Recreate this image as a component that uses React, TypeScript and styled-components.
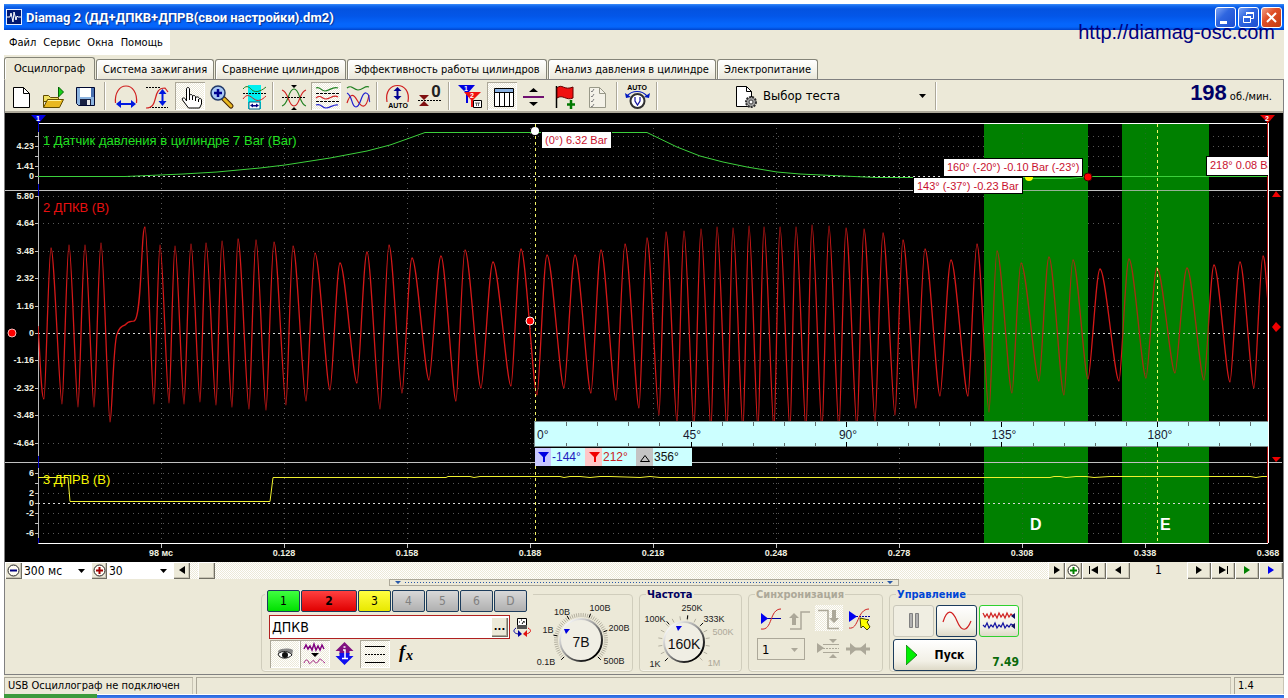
import React from 'react';
import styled, { createGlobalStyle, css } from 'styled-components';

const UI = '"DejaVu Sans Condensed", "DejaVu Sans", sans-serif';
const ARIAL = '"Liberation Sans", Arial, sans-serif';
const FACE = '#ece9d8';
const checker = css`
  background: repeating-conic-gradient(#ffffff 0 25%, #ece9d8 0 50%) 0 0 / 2px 2px;
`;

const GlobalStyle = createGlobalStyle`
  * { box-sizing: border-box; }
  body { margin: 0; background: #fff; font-family: ${UI}; font-size: 11px; color: #000; }
  button, input, select { font: inherit; color: inherit; margin: 0; padding: 0; border: 0; border-radius: 0; }
  svg { display: block; }
  svg text { white-space: pre; }
`;

const Page = styled.div`
  padding: 4px 4px 0;
  height: 100vh;
  min-height: 698px;
  overflow: hidden;
`;
const Shell = styled.div`
  position: relative;
  background: ${FACE};
`;
const TitleBar = styled.header`
  display: flex;
  align-items: center;
  gap: 4px;
  height: 26px;
  padding: 0 2px;
  background: linear-gradient(#3c8cf8 0, #1268ee 2px, #0453e0 5px, #0356e8 12px, #0566fc 20px, #0565fa 23px, #0044cc 100%);
`;
const Title = styled.h1`
  flex: 1;
  margin: 0;
  font-family: Roboto, "Open Sans", sans-serif;
  font-size: 13px;
  font-weight: 700;
  color: #fff;
  text-shadow: 1px 1px 1px #0a2f8c;
`;
const WinButtons = styled.div`
  display: flex;
  gap: 2px;
`;
const WinButton = styled.button<{ $close?: boolean }>`
  width: 21px;
  height: 21px;
  border: 1px solid #fff;
  border-radius: 3px;
  background: ${p => (p.$close
    ? 'linear-gradient(135deg, #f0a088, #e04f28 40%, #c23a10)'
    : 'linear-gradient(135deg, #7ea4f4, #2f66e0 40%, #1c4ed0)')};
`;
const SiteLink = styled.a`
  position: absolute;
  top: 17px;
  right: 9px;
  font: 20px/23px ${ARIAL};
  color: #000080;
  text-decoration: none;
`;
const MenuRow = styled.nav`
  display: flex;
  height: 27px;
`;
const MenuBar = styled.div`
  display: flex;
  align-items: center;
  gap: 7px;
  height: 25px;
  padding: 0 7px 0 5px;
  background: #fff;
`;
const MenuItem = styled.button`
  background: none;
`;
const Tabs = styled.div`
  display: flex;
  align-items: flex-end;
  gap: 1px;
  height: 23px;
  background: linear-gradient(#808080, #808080) 0 100% / 100% 1px no-repeat;
`;
const Tab = styled.button<{ $active?: boolean }>`
  height: ${p => (p.$active ? 23 : 21)}px;
  padding: 0 ${p => (p.$active ? 9 : 6)}px;
  border: 1px solid #848478;
  border-bottom-color: ${p => (p.$active ? FACE : '#808080')};
  border-radius: 3px 3px 0 0;
  background: ${p => (p.$active ? FACE : 'linear-gradient(#ffffff, #f4f3ea 60%, #e9e6d8)')};
  box-shadow: inset 1px 0 0 #fff;
  white-space: nowrap;
`;
const Body = styled.main`
  border: solid #808080;
  border-width: 0 1px 1px;
`;
const Toolbar = styled.div`
  display: flex;
  align-items: center;
  height: 33px;
  border-bottom: 2px solid #aca899;
`;
const ToolButton = styled.button<{ $pressed?: boolean; $tight?: boolean }>`
  width: 30px;
  height: 28px;
  margin-left: ${p => (p.$tight ? 0 : 2)}px;
  background: none;
  ${p => p.$pressed && css`
    ${checker}
    box-shadow: inset 1px 1px 0 #aca899, inset -1px -1px 0 #fff;
  `}
`;
const Divider = styled.i`
  width: 8px;
  height: 28px;
  background: linear-gradient(90deg, transparent 3px, #aca899 3px 4px, #fff 4px 5px, transparent 5px);
`;
const TestPicker = styled.label`
  display: grid;
  grid-template-columns: 26px 1fr;
  align-items: center;
  width: 197px;
  margin-left: 74px;
`;
const SelectBox = styled.span<{ $w?: number; $white?: boolean; $line?: boolean }>`
  display: grid;
  grid-template-columns: 1fr 16px;
  align-items: center;
  height: ${p => (p.$line ? 22 : 17)}px;
  width: ${p => (p.$w ? `${p.$w}px` : 'auto')};
  background: ${p => (p.$white ? '#fff' : 'transparent')};
  border: ${p => (p.$line ? '1px solid #aca899' : '0')};
  select {
    grid-area: 1 / 1 / 2 / 3;
    width: 100%;
    height: 100%;
    padding-left: ${p => (p.$line ? 4 : 2)}px;
    appearance: none;
    background: transparent;
    font-size: ${p => (p.$white ? 12 : 13)}px;
  }
  svg {
    grid-area: 1 / 2 / 2 / 3;
    pointer-events: none;
  }
`;
const Rpm = styled.output`
  display: flex;
  align-items: baseline;
  gap: 3px;
  margin: 0 11px 6px auto;
  font-size: 11px;
  b {
    font: 700 22px/26px ${ARIAL};
    color: #000066;
  }
`;
const ScrollRow = styled.div`
  display: flex;
  height: 17px;
`;
const Bevel = styled.button<{ $w: number }>`
  display: grid;
  place-items: center;
  flex: none;
  width: ${p => p.$w}px;
  height: 17px;
  background: ${FACE};
  box-shadow: inset 1px 1px 0 #fff, inset -1px -1px 0 #716f64, inset -2px -2px 0 #c8c4b4;
`;
const Track = styled.div`
  flex: 1;
  padding-left: 8px;
  ${checker}
`;
const PageNo = styled.output`
  flex: none;
  width: 57px;
  text-align: center;
  font-size: 12px;
  line-height: 17px;
`;
const Splitter = styled.div`
  width: 510px;
  height: 7px;
  margin: 0 auto;
  border: 1px solid #aca899;
`;
const Groups = styled.div`
  display: flex;
  justify-content: center;
  gap: 6px;
  height: 88px;
  padding: 2px 4px 0 0;
`;
const groupBox = css`
  border: 1px solid #d0cdbc;
  border-radius: 4px;
  box-shadow: inset 0 -1px 0 #f6f4ea;
`;
const ChannelGroup = styled.section`
  ${groupBox}
  display: flex;
  width: 372px;
  height: 78px;
  margin-top: 6px;
`;
const ChannelPane = styled.div`
  width: 273px;
`;
const Channels = styled.div`
  display: flex;
  gap: 1px;
  width: 268px;
  margin: -5px 0 0 3px;
  padding-left: 2px;
  background: ${FACE};
`;
const Channel = styled.button<{ $fill: string; $wide?: boolean; $dim?: boolean }>`
  width: ${p => (p.$wide ? 56 : 33)}px;
  height: 22px;
  border: 1px solid #1c3c5c;
  border-radius: 2px;
  background: ${p => p.$fill};
  color: ${p => (p.$dim ? '#808080' : '#000')};
  font-size: 12px;
  font-weight: ${p => (p.$wide ? 700 : 400)};
`;
const NameRow = styled.div`
  display: flex;
  align-items: center;
  gap: 3px;
  margin: 3px 0 0 7px;
`;
const NameField = styled.div`
  display: flex;
  width: 241px;
  height: 24px;
  padding: 1px;
  border: 1px solid #b02020;
  background: #fff;
  input {
    flex: 1;
    min-width: 0;
    padding-left: 1px;
    background: transparent;
    font-size: 14px;
  }
`;
const More = styled.button`
  width: 17px;
  height: 20px;
  background: ${FACE};
  box-shadow: inset 1px 1px 0 #fff, inset -1px -1px 0 #716f64, inset -2px -2px 0 #aca899;
  font-weight: 700;
  line-height: 10px;
`;
const IconRow = styled.div`
  display: flex;
  padding: 1px 0 0 8px;
`;
const Group = styled.fieldset<{ $w: number }>`
  ${groupBox}
  width: ${p => p.$w}px;
  min-width: 0;
  height: 84px;
  margin: 0;
  padding: 0;
`;
const Legend = styled.legend<{ $c: string }>`
  margin-left: 6px;
  padding: 0 1px;
  font-weight: 700;
  line-height: 13px;
  color: ${p => p.$c};
`;
const SyncGrid = styled.div`
  display: grid;
  grid-template-columns: repeat(4, 30px);
  align-items: center;
  padding: 4px 0 0 6px;
  row-gap: 5px;
`;
const Flat = styled.button<{ $pressed?: boolean }>`
  width: 28px;
  height: 26px;
  background: none;
  ${p => p.$pressed && checker}
`;
const SyncPick = styled.div`
  grid-column: span 2;
  padding-left: 2px;
`;
const ControlGrid = styled.div`
  display: grid;
  grid-template-columns: 41px 41px 40px;
  gap: 2px;
  padding: 4px 0 0 3px;
`;
const Push = styled.button<{ $kind?: 'off' | 'green'; $span?: boolean }>`
  display: flex;
  align-items: center;
  justify-content: center;
  gap: 18px;
  grid-column: span ${p => (p.$span ? 2 : 1)};
  height: 32px;
  border: 1px solid ${p => (p.$kind === 'off' ? '#c9c7ba' : p.$kind === 'green' ? '#2fd02f' : '#1c3c5c')};
  border-radius: 3px;
  background: ${p => (p.$kind === 'off' ? '#f0eee2' : 'linear-gradient(#ffffff, #f2f0e6 70%, #dedac8)')};
  font-size: 12px;
  font-weight: 700;
`;
const Value = styled.output`
  align-self: end;
  padding-bottom: 2px;
  text-align: right;
  color: #0a6a0a;
  font-size: 12px;
  font-weight: 700;
`;
const StatusBar = styled.footer`
  display: flex;
  gap: 3px;
  height: 19px;
  padding-top: 2px;
  background: ${FACE};
`;
const StatusCell = styled.div<{ $w?: number }>`
  flex: ${p => (p.$w ? 'none' : 1)};
  width: ${p => (p.$w ? `${p.$w}px` : 'auto')};
  padding-left: 3px;
  border: solid #aca899;
  border-width: 1px 0 0 1px;
  box-shadow: inset -1px 0 0 #c8c4b4;
  line-height: 15px;
`;
const Taskbar = styled.div`
  height: 6px;
  background: linear-gradient(90deg, #3c9a3c 93px, transparent 93px), linear-gradient(#fff 1px, #2a62d8 1px, #3c80f0 4px);
`;
const ChartSvg = styled.svg`
  width: 100%;
  height: auto;
  background: #000;
  font-family: ${ARIAL};
`;

/* ---------- oscillogram ---------- */

type Pt = [number, number];

const peaks: Pt[] = [
  [51, 248], [69, 245], [85, 245], [101, 243], [145, 227], [160, 245], [175, 246], [191, 244], [206, 243],
  [222, 241], [238, 239], [256, 240], [274, 242], [293, 246], [315, 253], [340, 263], [367, 252], [389, 245],
  [412, 258], [441, 256], [465, 250], [493, 262], [521, 249], [547, 255], [575, 255], [601, 250], [625, 244],
  [647, 238], [666, 232], [684, 231], [701, 229], [717, 227], [733, 228], [749, 226], [764, 227], [780, 227],
  [796, 227], [812, 225], [829, 226], [846, 228], [864, 229], [883, 233], [903, 240], [925, 249], [951, 260],
  [977, 244], [997, 251], [1021, 263], [1049, 257], [1073, 260], [1100, 269], [1129, 259], [1157, 268],
  [1187, 268], [1214, 265], [1240, 262], [1263, 256],
];
const troughs: Pt[] = [
  [44, 399], [62, 404], [78, 407], [94, 407], [110, 422], [154, 404], [169, 403], [184, 404], [200, 402],
  [216, 405], [232, 407], [249, 409], [266, 410], [286, 405], [306, 401], [330, 390], [357, 383], [380, 409],
  [402, 393], [429, 380], [456, 401], [481, 388], [511, 386], [537, 395], [564, 388], [591, 393], [616, 400],
  [639, 408], [659, 415], [677, 423], [694, 428], [711, 430], [727, 430], [743, 430], [758, 430], [774, 430],
  [790, 430], [806, 430], [822, 430], [839, 430], [857, 428], [875, 421], [895, 415], [916, 408], [940, 396],
  [968, 396], [989, 412], [1012, 393], [1039, 381], [1064, 395], [1088, 379], [1119, 381], [1146, 378],
  [1175, 373], [1204, 380], [1230, 382], [1254, 388],
];

const crankPath = (() => {
  const rise = (a: Pt, b: Pt) => {
    const dx = b[0] - a[0];
    return ` C${a[0] + dx * 0.24} ${a[1]} ${b[0] - dx * 0.34} ${b[1]} ${b[0]} ${b[1]}`;
  };
  const fall = (a: Pt, b: Pt) => {
    const dx = b[0] - a[0];
    return ` C${a[0] + dx * 0.3} ${a[1]} ${b[0] - dx * 0.24} ${b[1]} ${b[0]} ${b[1]}`;
  };
  let d = 'M38 326 C40 350 41 399 44 399';
  troughs.forEach((t, i) => {
    // Missing-tooth gap: the signal creeps up before the next tooth.
    if (i === 4) d += ' C112 422 113 345 117 334 C119 328 121 326 125 325 C129 320 131 322 134 321 C142 320 141 227 145 227';
    else d += rise(t, peaks[i]);
    const next = troughs[i + 1];
    if (next) d += fall(peaks[i], next);
  });
  return d + ' C1265 256 1266 280 1268 303';
})();

const pressurePath =
  'M38 176.500H125L160 175L183 174L217 172L260 168L285 165L330 158L367 151L390 145L407 139L425 132.500H647L677 147L700 156L723 162L747 167L777 172L800 174L843 176L876 177.500H1030V178.500H1070L1088 176.500H1268';
const camPath =
  'M38 477.500H68L70 501.500H270L273 477.500H446L448 476.500H470L474 477.500L480 476.500H560L564 477.500L570 476.500H580L590 477.500L600 476.500H610L640 477.500L650 476.500L660 477.500H1050L1054 476.500H1060L1066 477.500L1076 476.500H1086L1094 477.500L1110 476.500H1250L1256 477.500L1262 476.500H1268';

const columns = [161, 284, 407, 530, 653, 776, 899, 1022, 1145];
const timeLabels: [number, string][] = [
  [161, '98 мс'], [284, '0.128'], [407, '0.158'], [530, '0.188'], [653, '0.218'],
  [776, '0.248'], [899, '0.278'], [1022, '0.308'], [1145, '0.338'], [1268, '0.368'],
];
const rows = [136, 146, 156, 166, 196, 223, 251, 278, 306, 360, 388, 415, 443, 473, 483, 493, 513, 523, 533];
const zeroRows = [176, 333, 503];
const scale: [number, string][] = [
  [146, '4.23'], [166, '1.41'], [176, '0'], [196, '5.80'], [223, '4.64'], [251, '3.48'], [278, '2.32'],
  [306, '1.16'], [333, '0'], [360, '-1.16'], [388, '-2.32'], [415, '-3.48'], [443, '-4.64'],
  [473, '6'], [493, '2'], [503, '0'], [513, '-2'], [533, '-6'],
];
const majorTicks = [691, 846, 1001, 1157];
const minorTicks = [566, 597, 628, 659, 722, 753, 784, 815, 877, 908, 939, 970, 1033, 1064, 1095, 1126, 1188, 1219, 1250];

const Tag = ({ x, y, w, h, children }: { x: number; y: number; w: number; h: number; children: string }) => (
  <g>
    <rect x={x - 1} y={y - 1} width={w + 2} height={h + 2} fill="#000" />
    <rect x={x} y={y} width={w} height={h} fill="#fff" />
    <text x={x + 3} y={y + 12} fontSize="11" fill="#c8102e">{children}</text>
  </g>
);

const Chart = () => (
  <ChartSvg viewBox="5 113 1278 449" role="img" aria-label="Осциллограмма">
    <defs><clipPath id="plot"><rect x="38" y="113" width="1230" height="431" /></clipPath></defs>
    <g shapeRendering="crispEdges">
      <g stroke="#585858" strokeDasharray="1 4">
        {columns.map(x => <path key={x} d={`M${x + 0.5} 128V543`} />)}
        {rows.map(y => <path key={y} d={`M43 ${y + 0.5}H1268`} />)}
      </g>
      <path d="M984 124h104v419H984zM1122 124h87v419h-87z" fill="#008000" />
      <g stroke="#2c6c2c" strokeDasharray="1 4">
        <path d="M1022.500 128V543M1145.500 128V543" />
      </g>
      <path d="M5 190.500H1282M5 462.500H1282" stroke="#c0c0c0" />
      <path d="M38 123.500H1268M38 543.500H1268" stroke="#fff" />
      <path d="M38.500 124V544" stroke="#b8b8b8" />
      <path d="M38.500 120V132M38.500 184V196M38.500 456V468M38.500 538V543" stroke="#0000c0" />
      {zeroRows.map(y => <path key={y} d={`M38 ${y + 0.5}H1268`} stroke="#d8d8d8" strokeDasharray="2 3" />)}
      {[...rows, ...zeroRows].map(y => <path key={y} d={`M35 ${y + 0.5}h3`} stroke="#c0c0c0" />)}
      {columns.map(x => <path key={x} d={`M${x + 0.5} 544v4`} stroke="#c0c0c0" />)}
    </g>
    <g fontSize="9" fontWeight="700" fill="#f0f0e0">
      <g textAnchor="end">{scale.map(([y, t]) => <text key={y} x="34" y={y + 3}>{t}</text>)}</g>
      <g textAnchor="middle">{timeLabels.map(([x, t]) => <text key={x} x={x} y="556">{t}</text>)}</g>
    </g>
    <g clipPath="url(#plot)" fill="none">
      <path d={crankPath} stroke="#d41818" strokeWidth="1.300" />
      <path d="M984 124h104v298H984zM1122 124h87v298h-87z" fill="#008000" opacity="0.22" />
      <path d={pressurePath} stroke="#3cd03c" />
      <path d={camPath} stroke="#f0f030" />
    </g>
    <g fontSize="13">
      <text x="43" y="145" fill="#22e022">1 Датчик давления в цилиндре 7 Bar (Bar)</text>
      <text x="43" y="212" fill="#e81010">2 ДПКВ (В)</text>
      <text x="43" y="484" fill="#f8f800">3 ДПРВ (В)</text>
    </g>
    <g shapeRendering="crispEdges">
      <path d="M535.500 124V543M1157.500 124V543" stroke="#f4f468" strokeDasharray="3 3" />
      <path d="M1267.500 121V543" stroke="#b01010" />
      <path d="M1268.500 123V543" stroke="#fff" />
    </g>
    <g fontSize="16" fontWeight="700" fill="#fff">
      <text x="1030" y="530">D</text>
      <text x="1160" y="530">E</text>
    </g>

    <rect x="534" y="421" width="734" height="26" fill="#ccffff" />
    <path d="M534.500 421V447M534 421.500H1268M534 446.500H1268" stroke="#7c8c8c" fill="none" />
    {minorTicks.map(x => <path key={x} d={`M${x + 0.5} 422v4M${x + 0.5} 446v-3`} stroke="#607070" />)}
    {majorTicks.map(x => <path key={x} d={`M${x + 0.5} 422v5M${x + 0.5} 447v-5`} stroke="#000" />)}
    <g fontSize="12" fill="#181830">
      <text x="537" y="439">0°</text>
      <text x="692" y="439" textAnchor="middle">45°</text>
      <text x="848" y="439" textAnchor="middle">90°</text>
      <text x="1004" y="439" textAnchor="middle">135°</text>
      <text x="1160" y="439" textAnchor="middle">180°</text>
    </g>
    <rect x="535" y="448" width="157" height="18" fill="#ccffff" />
    <rect x="535" y="448" width="16" height="18" fill="#c8c8ff" />
    <rect x="585" y="448" width="17" height="18" fill="#ffc8c8" />
    <rect x="636" y="448" width="17" height="18" fill="#c4c4c4" />
    <path d="M538 452h11l-4 5v5h-2v-5z" fill="#0000e0" />
    <path d="M589 452h11l-4 5v5h-2v-5z" fill="#f00000" />
    <path d="M640.500 461.500h9l-4.500 -6z" fill="none" stroke="#000" />
    <g fontSize="12">
      <text x="552" y="461" fill="#2020c0">-144°</text>
      <text x="603" y="461" fill="#c82020">212°</text>
      <text x="654" y="461" fill="#101010">356°</text>
    </g>

    <Tag x={542} y={132} w={69} h={16}>(0°) 6.32 Bar</Tag>
    <circle cx="1029" cy="177" r="4" fill="#ff0" />
    <Tag x={944} y={159} w={138} h={17}>160° (-20°) -0.10 Bar (-23°)</Tag>
    <Tag x={914} y={178} w={108} h={15}>143° (-37°) -0.23 Bar</Tag>
    <g clipPath="url(#plot)"><Tag x={1207} y={157} w={70} h={18}>218° 0.08 Bar</Tag></g>
    <circle cx="535" cy="131" r="4" fill="#fff" />
    <circle cx="530" cy="321" r="4" fill="#f00" stroke="#fff" />
    <circle cx="1088" cy="177" r="4" fill="#f00" stroke="#400" />
    <circle cx="12" cy="333" r="4" fill="#f00" stroke="#fbb" />

    <path d="M31 115h15l-7 8z" fill="#0000e0" />
    <path d="M1260 115h15l-7 8z" fill="#e00000" />
    <g fontSize="7" fontWeight="700" fill="#fff" textAnchor="middle">
      <text x="38" y="121">1</text>
      <text x="1267" y="121">2</text>
    </g>
    <path d="M1272 197l4-6 5 6zM1272 457h9l-5 5zM1276 322l5 5-5 5-4-5z" fill="#f00000" />
  </ChartSvg>
);

/* ---------- toolbar icons, drawn on a 30x28 field ---------- */

const Glyph = ({ children, w = 30, h = 28 }: { children: React.ReactNode; w?: number; h?: number }) => (
  <svg width={w} height={h} viewBox={`0 0 ${w} ${h}`} fill="none" aria-hidden="true">{children}</svg>
);

const Tools = {
  create: <Glyph><path d="M6.500 5.500h10l6 6v14h-16z" fill="#fff" stroke="#000" /><path d="M16.500 5.500v6h6" stroke="#000" /></Glyph>,
  open: (
    <Glyph>
      <path d="M4.500 13.500h5l2 2h8v4h-15z" fill="#f0e060" stroke="#604c00" />
      <path d="M4.500 25.500l4-8h16l-4 8z" fill="#e8b820" stroke="#604c00" />
      <path d="M4.500 14v11" stroke="#604c00" />
      <path d="M19.500 5v10l5-5z" fill="#18d018" stroke="#006000" />
      <path d="M9 18.500h13" stroke="#fff4a0" />
    </Glyph>
  ),
  save: (
    <Glyph>
      <path d="M5.500 5.500h18v18h-16l-2-2z" fill="#8cb4e0" stroke="#000830" />
      <path d="M9 6h11v9H9z" fill="#fff" /><path d="M20 6h3v9h-3z" fill="#4870b0" />
      <path d="M9 17h11v6H9z" fill="#182040" /><path d="M16 18h3v5h-3z" fill="#e8e8e8" />
    </Glyph>
  ),
  arch: (
    <Glyph>
      <path d="M4.500 21c-1-10 4-17 10.500-17s11.500 7 10.500 17" stroke="#d02020" strokeWidth="1.200" />
      <path d="M5 22l5-4v3h10v-3l5 4-5 4v-3H10v3z" fill="#0018e0" />
    </Glyph>
  ),
  rise: (
    <Glyph>
      <path d="M3 5.500h15M6 25.500h19" stroke="#000" strokeDasharray="2 1" />
      <path d="M3 26c14 0 5-20 19-20l3 4" stroke="#d02020" strokeWidth="1.200" />
      <path d="M19.500 7l4 5h-3v7h3l-4 5-4-5h3v-7h-3z" fill="#0018e0" />
    </Glyph>
  ),
  hand: (
    <Glyph>
      <path d="M11.500 19V7c0-2 3-2 3 0v7c0-2 3-2 3 0v1c0-2 3-2 3 0v1c1-2 4-1 4 1 1-1 2 0 2 1v4l-2 4h-11l-6-8c-1-2 1-3 3-1z" fill="#fff" stroke="#000" />
      <path d="M14.500 14v4M17.500 15v3M20.500 16v3M23.500 17v3" stroke="#000" />
    </Glyph>
  ),
  zoom: (
    <Glyph>
      <path d="M16 16l8 8" stroke="#402000" strokeWidth="5" strokeLinecap="round" />
      <path d="M17 17l7 7" stroke="#e8b820" strokeWidth="3" strokeLinecap="round" />
      <circle cx="11" cy="11" r="7" fill="#a8c8f4" stroke="#203868" strokeWidth="1.500" />
      <path d="M7 11h8M11 7v8" stroke="#000090" strokeWidth="2.500" />
    </Glyph>
  ),
  span: (
    <Glyph>
      <path d="M9 3h13v24H9z" fill="#00f0f0" />
      <path d="M4 7c4-5 7-1 9 1s7 3 14-3" stroke="#208020" />
      <path d="M4 11.500h23" stroke="#000" strokeDasharray="2 1" />
      <path d="M4 17c4-6 7-3 11 0s8 1 12-3" stroke="#d02020" />
      <path d="M10 20h11v7H10z" fill="#fff" stroke="#006080" />
      <path d="M11 23.500l3-2v1.500h3v-1.500l3 2-3 2v-1h-3v1z" fill="#000080" />
    </Glyph>
  ),
  cross: (
    <Glyph>
      <path d="M3 24C10 22 9 7 15 7s5 15 12 17" stroke="#208020" strokeWidth="1.200" />
      <path d="M3 8C10 10 9 24 15 24s5-14 12-16" stroke="#d02020" strokeWidth="1.200" />
      <path d="M3 15.500h24" stroke="#000" strokeDasharray="2 1" />
      <path d="M12 3h6l-3 3zM12 28h6l-3-3z" fill="#000" />
    </Glyph>
  ),
  split: (
    <Glyph>
      <path d="M5 6c4-2 5 3 9 3s8-5 13-3" stroke="#208020" strokeWidth="1.200" />
      <path d="M5 11.500h23M5 19.500h23" stroke="#000" strokeDasharray="3 1" />
      <path d="M5 16c5-4 6 1 10 1s8-5 12-2" stroke="#d02020" strokeWidth="1.200" />
      <path d="M5 23c5-2 6 3 10 3s8-4 12-3" stroke="#2020d0" strokeWidth="1.200" />
    </Glyph>
  ),
  merge: (
    <Glyph>
      <path d="M4 6c5-4 6 2 11 2s7-5 11-3" stroke="#208020" strokeWidth="1.200" />
      <path d="M4 21c3-9 6-10 10-3s9 11 12-5" stroke="#d02020" strokeWidth="1.200" />
      <path d="M4 11c6 3 4 14 9 14s5-15 10-14 2 8 4 9" stroke="#2020d0" strokeWidth="1.200" />
    </Glyph>
  ),
  auto: (
    <Glyph>
      <path d="M4 20C2 9 8 3.500 14.500 3.500S27 9 25 20" stroke="#d02020" strokeWidth="1.200" />
      <path d="M14.500 5l4 4h-3v5h3l-4 4-4-4h3v-5h-3z" fill="#000090" />
      <text x="15" y="26" textAnchor="middle" fontFamily="Liberation Sans" fontSize="7" fontWeight="700" fill="#000">AUTO</text>
    </Glyph>
  ),
  zero: (
    <Glyph>
      <path d="M4 13h10l-5 5zM4 24h10l-5-5z" fill="#801010" />
      <path d="M3 18.500h24" stroke="#000" strokeDasharray="2 1" />
      <text x="21" y="15" textAnchor="middle" fontFamily="Liberation Sans" fontSize="17" fontWeight="700" fill="#202020">0</text>
    </Glyph>
  ),
  marks: (
    <Glyph>
      <path d="M3 3h17l-7 8v10h-2V11z" fill="#0000e0" />
      <path d="M9 10h17l-8 8v7h-2v-7z" fill="#f01010" />
      <text x="11" y="9" textAnchor="middle" fontFamily="Liberation Sans" fontSize="7" fontWeight="700" fill="#fff">1</text>
      <text x="17" y="16" textAnchor="middle" fontFamily="Liberation Sans" fontSize="7" fontWeight="700" fill="#fff">2</text>
      <path d="M18.500 18.500h8v7h-8z" fill="#fff" stroke="#000" /><path d="M20 21h5M21.500 21v3M23.500 21v3" stroke="#606060" />
    </Glyph>
  ),
  table: (
    <Glyph>
      <path d="M7.500 6.500h19v18h-19z" fill="#fff" stroke="#000" /><path d="M8 7h18v3H8z" fill="#88b0e0" />
      <path d="M7 10.500h20M12.500 10v14M17.500 10v14M22.500 10v14" stroke="#000" />
    </Glyph>
  ),
  level: <Glyph><path d="M4 15h21" stroke="#701070" strokeWidth="2" /><path d="M10 10h9l-4.500-4zM10 20h9l-4.500 4z" fill="#000" /></Glyph>,
  flag: (
    <Glyph>
      <path d="M5.500 4v22" stroke="#000" strokeWidth="1.500" />
      <path d="M6 6c5-5 7 3 16-1v11c-7 3-10-4-16 0z" fill="#f01010" stroke="#600000" />
      <path d="M16 22.500h8M20 18v9" stroke="#007800" strokeWidth="2.500" />
    </Glyph>
  ),
  list: (
    <Glyph>
      <path d="M6.500 5.500h10l6 6v14h-16z" fill="#f4f2e8" stroke="#989888" /><path d="M16.500 5.500v6h6" stroke="#989888" />
      <path d="M8 9l1 1 2-3M8 14l1 1 2-3M8 19l1 1 2-3M8 24l1 1 2-3" stroke="#808080" />
    </Glyph>
  ),
  autoV: (
    <Glyph>
      <text x="14" y="8" textAnchor="middle" fontFamily="Liberation Sans" fontSize="7" fontWeight="700" fill="#000">AUTO</text>
      <path d="M4 14c5-6 15-6 20 0" stroke="#0018c0" strokeWidth="1.200" />
      <path d="M2 11l1 5 5-1zM27 11l-1 5-5-1z" fill="#0018c0" />
      <circle cx="14.500" cy="19" r="7" fill="#fff" stroke="#303030" strokeWidth="2" />
      <path d="M12 15v4l2.500 4 2.500-4v-4" stroke="#1010a0" strokeWidth="1.200" />
    </Glyph>
  ),
};

const leftTools: (keyof typeof Tools | '|')[] = [
  'create', 'open', 'save', '|', 'arch', 'rise', 'hand', 'zoom', 'span', '|', 'cross', 'split', 'merge', '|',
  'auto', 'zero', '|', 'marks', 'table', 'level', 'flag', 'list', '|', 'autoV', '|',
];
const pressedTools = ['hand', 'split', 'table'];

const Arrow = ({ d, c = '#000' }: { d: 'l' | 'r' | 'd' | 'first' | 'last'; c?: string }) => (
  <svg width="14" height="9" viewBox="0 0 14 9" fill={c} aria-hidden="true">
    {d === 'l' && <path d="M10 0v8L4 4z" />}
    {d === 'r' && <path d="M4 0v8l6-4z" />}
    {d === 'd' && <path d="M3 3h7L6.500 7z" />}
    {d === 'first' && <path d="M2 0h1v8H2zM11 0v8L4 4z" />}
    {d === 'last' && <path d="M3 0v8l7-4zM11 0h1v8h-1z" />}
  </svg>
);
const Round = ({ c, plus }: { c: string; plus?: boolean }) => (
  <svg width="15" height="15" viewBox="0 0 15 15" fill="none" aria-hidden="true">
    <circle cx="7.500" cy="7.500" r="5.500" fill="#fffdf4" stroke="#202020" />
    <path d={plus ? 'M4 7.500h7M7.500 4v7' : 'M4 7.500h7'} stroke={c} strokeWidth="2" />
  </svg>
);

/* ---------- rotary knobs ---------- */

type Dial = {
  box: string; cx: number; cy: number; r: number; value: string; id: string; name: string;
  labels: [number, number, string, boolean?][]; major: number[]; dot: Pt; step: number;
};
const Knob = ({ box, cx, cy, r, value, id, name, labels, major, dot, step }: Dial) => {
  const [, , w, h] = box.split(' ').map(Number);
  const ray = (deg: number, a: number, b: number) => {
    const t = (deg * Math.PI) / 180;
    return `M${cx + a * Math.sin(t)} ${cy - a * Math.cos(t)}L${cx + b * Math.sin(t)} ${cy - b * Math.cos(t)}`;
  };
  const minor: number[] = [];
  for (let a = -135; a <= 135; a += step) minor.push(a);
  return (
    <svg width={w} height={h} viewBox={box} fontFamily="Liberation Sans" role="img" aria-label={name}>
      <defs>
        <linearGradient id={id} x1="0" y1="0" x2="1" y2="1">
          <stop offset="0.1" stopColor="#ffffff" /><stop offset="0.45" stopColor="#a0a0a0" /><stop offset="0.85" stopColor="#000000" />
        </linearGradient>
      </defs>
      <path d={minor.map(a => ray(a, r + 1, r + 5)).join('')} stroke="#b4b0a0" />
      <path d={major.map(a => ray(a, r + 2, r + 6)).join('')} stroke="#000" />
      <circle cx={cx} cy={cy} r={r - 1} fill="#f0eee4" stroke={`url(#${id})`} strokeWidth="2" />
      <path d={`M${dot[0] - 3} ${dot[1] - 2}h6l-4 5z`} fill="#0000e0" />
      <g fontSize="9" textAnchor="middle">
        {labels.map(([x, y, t, dim]) => <text key={t} x={x} y={y + 4} fill={dim ? '#aca899' : '#202020'}>{t}</text>)}
      </g>
      <text x={cx} y={cy + 7} fontSize="14" textAnchor="middle" fill="#101010">{value}</text>
    </svg>
  );
};

const gray = 'linear-gradient(#d8d8d8, #b0b0b0)';

export default function App() {
  return (
    <Page>
      <GlobalStyle />
      <Shell>
        <TitleBar>
          <svg width="16" height="16" viewBox="0 0 16 16" aria-hidden="true">
            <rect width="16" height="16" fill="#e8f0ff" /><rect x="1" y="1" width="14" height="14" fill="#001870" />
            <path d="M1 8h3l1-4 2 9 1-10 2 8 1-4 1 1h3" fill="none" stroke="#fff" />
          </svg>
          <Title>Diamag 2 (ДД+ДПКВ+ДПРВ(свои настройки).dm2)</Title>
          <WinButtons>
            <WinButton aria-label="Свернуть"><svg width="19" height="19"><path d="M4 13h7v3H4z" fill="#fff" /></svg></WinButton>
            <WinButton aria-label="Восстановить">
              <svg width="19" height="19" fill="none" stroke="#fff"><path d="M7.500 7V4.500h7v6H12M4.500 8.500h7v6h-7z" /><path d="M7 5h8M4 9h8" strokeWidth="2" /></svg>
            </WinButton>
            <WinButton $close aria-label="Закрыть">
              <svg width="19" height="19"><path d="M5 5l9 9M14 5l-9 9" stroke="#fff" strokeWidth="2" /></svg>
            </WinButton>
          </WinButtons>
        </TitleBar>
        <SiteLink href="#site">http://diamag-osc.com</SiteLink>
        <MenuRow>
          <MenuBar>
            {['Файл', 'Сервис', 'Окна', 'Помощь'].map(t => <MenuItem key={t}>{t}</MenuItem>)}
          </MenuBar>
        </MenuRow>
        <Tabs role="tablist">
          {['Осциллограф', 'Система зажигания', 'Сравнение цилиндров', 'Эффективность работы цилиндров',
            'Анализ давления в цилиндре', 'Электропитание'].map((t, i) => (
            <Tab key={t} role="tab" aria-selected={i === 0} $active={i === 0}>{t}</Tab>
          ))}
        </Tabs>
        <Body>
          <Toolbar>
            {leftTools.map((t, i) => (t === '|'
              ? <Divider key={i} />
              : <ToolButton key={i} aria-label={t} $pressed={pressedTools.includes(t)}>{Tools[t]}</ToolButton>))}
            <TestPicker>
              <Glyph w={24}>
                <path d="M1.500 4.500h10l5 5v15h-15z" fill="#fff" stroke="#000" /><path d="M11.500 4.500v5h5" stroke="#000" />
                <circle cx="16" cy="20" r="5" fill="#a0a0a0" stroke="#303030" strokeWidth="2" strokeDasharray="2 1" />
                <circle cx="16" cy="20" r="2" fill="#fff" stroke="#404040" />
              </Glyph>
              <SelectBox>
                <select aria-label="Выбор теста"><option>Выбор теста</option></select>
                <Arrow d="d" />
              </SelectBox>
            </TestPicker>
            <Divider />
            <Rpm><b>198</b>об./мин.</Rpm>
          </Toolbar>
          <Chart />
          <ScrollRow>
            <Bevel $w={17} aria-label="Уменьшить"><Round c="#000080" /></Bevel>
            <SelectBox $w={69} $white>
              <select aria-label="Развёртка"><option>300 мс</option></select><Arrow d="d" />
            </SelectBox>
            <Bevel $w={16} aria-label="Увеличить"><Round c="#a00000" plus /></Bevel>
            <SelectBox $w={66} $white>
              <select aria-label="Шаг"><option>30</option></select><Arrow d="d" />
            </SelectBox>
            <Bevel $w={17} aria-label="Влево"><Arrow d="l" /></Bevel>
            <Track><Bevel $w={17} aria-label="Ползунок" /></Track>
            <Bevel $w={17} aria-label="Вправо"><Arrow d="r" /></Bevel>
            <Bevel $w={17} aria-label="Добавить"><Round c="#008000" plus /></Bevel>
            <Bevel $w={24} aria-label="В начало"><Arrow d="first" /></Bevel>
            <Bevel $w={24} aria-label="Назад"><Arrow d="l" /></Bevel>
            <PageNo>1</PageNo>
            <Bevel $w={24} aria-label="Вперёд"><Arrow d="r" /></Bevel>
            <Bevel $w={24} aria-label="В конец"><Arrow d="last" /></Bevel>
            <Bevel $w={24} aria-label="Воспроизвести"><Arrow d="r" c="#008000" /></Bevel>
            <Bevel $w={24} aria-label="Далее"><Arrow d="r" c="#0000f0" /></Bevel>
          </ScrollRow>
          <Splitter>
            <svg width="508" height="5" aria-hidden="true">
              <path d="M5 1h6L8 4zM497 1h6l-3 3z" fill="#2858a8" />
              <path d="M15 2.500h478" stroke="#2858a8" strokeDasharray="1 2" />
            </svg>
          </Splitter>
          <Groups>
            <ChannelGroup>
              <ChannelPane>
                <Channels>
                  <Channel $fill="linear-gradient(#40ff40, #00e000)">1</Channel>
                  <Channel $fill="linear-gradient(#ff4040, #e00000)" $wide>2</Channel>
                  <Channel $fill="linear-gradient(#ffff40, #e8e800)">3</Channel>
                  {['4', '5', '6', 'D'].map(c => <Channel key={c} $fill={gray} $dim>{c}</Channel>)}
                </Channels>
                <NameRow>
                  <NameField>
                    <input aria-label="Название канала" defaultValue="ДПКВ" />
                    <More aria-label="Обзор">...</More>
                  </NameField>
                  <svg width="19" height="20" viewBox="0 0 19 20" fill="none" aria-hidden="true">
                    <path d="M4.500 1.500h9v9h-9z" fill="#fff" stroke="#000" /><path d="M4 8h10v4H4z" fill="#505050" />
                    <path d="M6 5h1M8 3h1M11 5h1M9 7l2-3" stroke="#000" />
                    <path d="M3 11c-3 2-3 5 2 6" stroke="#0000a0" /><path d="M5 13v7l4-3z" fill="#0000a0" />
                    <path d="M15 11c4 2 3 5-2 6" stroke="#e01010" /><path d="M14 13v7l-4-3z" fill="#e01010" />
                  </svg>
                </NameRow>
                <IconRow>
                  <ToolButton $tight $pressed aria-label="Показать">
                    <Glyph>
                      <path d="M8 11c3-3 11-3 15-1l-1 6H9z" fill="#888" />
                      <path d="M8 14c4-4 11-3 14 1-4 4-10 4-13 1z" fill="#fff" stroke="#202020" />
                      <circle cx="15" cy="15" r="3" fill="#101010" />
                    </Glyph>
                  </ToolButton>
                  <ToolButton $tight $pressed aria-label="Сгладить">
                    <Glyph>
                      <path d="M4 9l2-4 2 4 2-3 2 4 2-6 2 6 2-4 2 4 2-5 2 4" stroke="#800080" strokeWidth="1.500" />
                      <path d="M11 13h8l-4 4z" fill="#000" />
                      <path d="M4 23c2-5 4-3 5 0s4-5 5-2 4 2 5-1 4 2 6 3" stroke="#a02080" />
                    </Glyph>
                  </ToolButton>
                  <ToolButton $tight aria-label="Масштаб">
                    <Glyph>
                      <path d="M14.500 2l9 9h-4v3h-10v-3h-4z" fill="#801080" /><path d="M14.500 25l9-9h-4v-3h-10v3h-4z" fill="#1010f0" />
                      <path d="M13 10h2v8M12 18.500h6M13.500 7h2" stroke="#fff" strokeWidth="1.500" />
                    </Glyph>
                  </ToolButton>
                  <ToolButton $tight $pressed aria-label="Уровни">
                    <Glyph><path d="M5 6.500h20M5 22.500h20" stroke="#000" /><path d="M5 14.500h20" stroke="#000" strokeDasharray="2 1" /></Glyph>
                  </ToolButton>
                  <ToolButton $tight aria-label="Функция">
                    <Glyph>
                      <text x="9" y="18" fontFamily="Liberation Serif" fontStyle="italic" fontWeight="700" fontSize="18" fill="#000">f</text>
                      <text x="16" y="20" fontFamily="Liberation Serif" fontStyle="italic" fontWeight="700" fontSize="14" fill="#000">x</text>
                    </Glyph>
                  </ToolButton>
                </IconRow>
              </ChannelPane>
              <Knob
                box="535 595 97 76" cx={581} cy={640} r={22} value="7В" id="knobV" name="Напряжение" dot={[567, 631]} step={5}
                major={[-135, -80, -30, 20, 70, 135]}
                labels={[[562, 611, '10В'], [600, 607, '100В'], [548, 629, '1В'], [619, 627, '200В'], [546, 661, '0.1В'], [614, 660, '500В']]}
              />
            </ChannelGroup>
            <Group $w={103}>
              <Legend $c="#000060">Частота</Legend>
              <Knob
                box="640 602 101 69" cx={684} cy={643} r={21} value="160K" id="knobF" name="Частота" dot={[679, 629]} step={18}
                major={[-135, -40, 8, 45]}
                labels={[[655, 619, '100K'], [692, 608, '250K'], [714, 619, '333K'], [723, 632, '500K', true], [714, 663, '1M', true], [655, 664, '1K']]}
              />
            </Group>
            <Group $w={135}>
              <Legend $c="#aca899">Синхронизация</Legend>
              <SyncGrid>
                <Flat aria-label="Уровень">
                  <Glyph w={28} h={26}><path d="M6 13.500h20" stroke="#0000a0" /><path d="M6 8v11l7-5.500z" fill="#0000f0" /><path d="M6 24c12 2 8-20 20-20" stroke="#d02020" /></Glyph>
                </Flat>
                <Flat aria-label="По фронту">
                  <Glyph w={28} h={26}><path d="M5 24h11V7h9" stroke="#aca899" strokeWidth="1.500" /><path d="M9 8l5 5h-3v7H7v-7H4z" fill="#aca899" /></Glyph>
                </Flat>
                <Flat $pressed aria-label="По спаду">
                  <Glyph w={28} h={26}><path d="M3 5.500h10v18h11" stroke="#aca899" strokeWidth="1.500" /><path d="M19 18l-5-5h3V5h4v8h3z" fill="#aca899" /></Glyph>
                </Flat>
                <Flat aria-label="Выбрать точку">
                  <Glyph w={28} h={26}>
                    <path d="M5 11.500h20" stroke="#0000a0" strokeDasharray="2 1" /><path d="M4 6v11l8-5.500z" fill="#0000f0" />
                    <path d="M4 23c10 2 8-19 20-19" stroke="#d02020" />
                    <path d="M15 13l9 2-2 2 3 5-3 3-4-4-2 2z" fill="#ff0" stroke="#404000" />
                  </Glyph>
                </Flat>
                <SyncPick>
                  <SelectBox $w={48} $line>
                    <select aria-label="Канал синхронизации"><option>1</option></select><Arrow d="d" c="#aca899" />
                  </SelectBox>
                </SyncPick>
                <Flat aria-label="Сжать">
                  <Glyph w={28} h={26}><path d="M2 7v10l7-5z" fill="#aca899" /><path d="M8 8.500h16M8 16.500h16" stroke="#aca899" /><path d="M8 12.500h16" stroke="#aca899" strokeDasharray="2 1" /><path d="M14 3h8l-4 4zM14 22h8l-4-4z" fill="#aca899" /></Glyph>
                </Flat>
                <Flat aria-label="Сузить">
                  <Glyph w={28} h={26}><path d="M1 13h24" stroke="#aca899" strokeWidth="3" /><path d="M5 7v12l7-6zM21 7v12l-7-6z" fill="#aca899" /></Glyph>
                </Flat>
              </SyncGrid>
            </Group>
            <Group $w={134}>
              <Legend $c="#0046d5">Управление</Legend>
              <ControlGrid>
                <Push $kind="off" aria-label="Пауза">
                  <svg width="12" height="16"><path d="M1.500.500h3v14h-3zM7.500.500h3v14h-3z" fill="#b0b0b0" stroke="#808080" /></svg>
                </Push>
                <Push aria-label="Одиночный">
                  <svg width="30" height="20" fill="none"><path d="M1 11C5-2 10-2 15 10s10 10 14 0" stroke="#d02020" strokeWidth="1.200" /></svg>
                </Push>
                <Push $kind="green" aria-label="Непрерывный">
                  <svg width="34" height="20" fill="none">
                    <path d="M1 2l2 4 2-3 2 4 2-5 2 4 2-3 2 4 2-5 2 4 2-3 2 4 2-5 2 4 2-3 2 2" stroke="#d02020" strokeWidth="1.200" />
                    <path d="M1 14l2 2 2-4 2 5 2-3 2 2 2-4 2 5 2-3 2 2 2-4 2 5 2-3 2 2 2-3 2 1" stroke="#1010a0" strokeWidth="1.200" />
                    <path d="M33 2v6l-4-3zM33 12v6l-4-3z" fill="#101060" />
                  </svg>
                </Push>
                <Push $span>
                  <svg width="11" height="20"><path d="M0 0v20l11-10z" fill="#00f000" stroke="#208020" /></svg>Пуск
                </Push>
                <Value>7.49</Value>
              </ControlGrid>
            </Group>
          </Groups>
        </Body>
        <StatusBar>
          <StatusCell $w={189}>USB Осциллограф не подключен</StatusCell>
          <StatusCell />
          <StatusCell $w={50}>1.4</StatusCell>
        </StatusBar>
      </Shell>
      <Taskbar />
    </Page>
  );
}
